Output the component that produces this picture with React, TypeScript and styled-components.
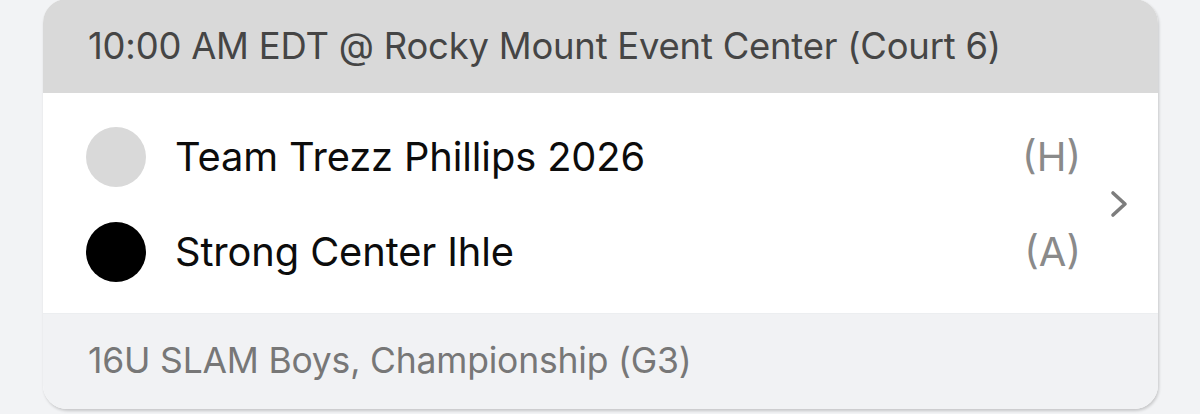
import React from "react";
import styled, { createGlobalStyle } from "styled-components";

const Global = createGlobalStyle`
  html, body { margin: 0; padding: 0; background: #f2f3f5; }
  body { font-family: "Inter", "Noto Sans", sans-serif; -webkit-font-smoothing: antialiased; }
`;

const Page = styled.div`
  width: 1200px;
  height: 414px;
  padding: 0 42px 0 43px;
  box-sizing: border-box;
  overflow: hidden;
  background: #f2f3f5;
`;

const Card = styled.div`
  margin-top: -1px;
  width: 1115px;
  border-radius: 24px;
  overflow: hidden;
  background: #ffffff;
  box-shadow: 1px 2px 3px rgba(0, 0, 0, 0.18);
`;

const Header = styled.div`
  height: 94px;
  display: flex;
  align-items: center;
  padding: 0 45px;
  background: #d9d9d9;
  color: #454545;
  font-size: 36.4px;
  letter-spacing: -0.2px;
`;

const Body = styled.div`
  display: flex;
  align-items: center;
  padding: 16px 0 14px 43px;
`;

const Rows = styled.div`
  flex: 1;
  display: flex;
  flex-direction: column;
`;

const Row = styled.div`
  height: 95px;
  display: flex;
  align-items: center;
`;

const Dot = styled.span<{ $color: string }>`
  width: 60px;
  height: 60px;
  border-radius: 50%;
  background: ${(p) => p.$color};
  flex: none;
`;

const Name = styled.span`
  margin-left: 29px;
  flex: 1;
  font-size: 39.8px;
  color: #0c0c0c;
  letter-spacing: -0.1px;
`;

const Side = styled.span`
  font-size: 40px;
  color: #8a8a8a;
`;

const Chevron = styled.div`
  width: 77px;
  display: flex;
  justify-content: flex-start;
  padding-left: 29px;
  box-sizing: border-box;
`;

const Footer = styled.div`
  height: 96px;
  display: flex;
  align-items: center;
  padding: 0 45px;
  background: #f1f2f4;
  border-top: 1px solid #eceef0;
  color: #777777;
  font-size: 35.5px;
  letter-spacing: -0.2px;
  padding-bottom: 2px;
  box-sizing: border-box;
`;

const teams = [
  { name: "Team Trezz Phillips 2026", side: "(H)", color: "#d9d9d9" },
  { name: "Strong Center Ihle", side: "(A)", color: "#000000" },
];

export default function App() {
  return (
    <>
      <Global />
      <Page>
        <Card>
          <Header>10:00 AM EDT @ Rocky Mount Event Center (Court 6)</Header>
          <Body>
            <Rows>
              {teams.map((t) => (
                <Row key={t.name}>
                  <Dot $color={t.color} />
                  <Name>{t.name}</Name>
                  <Side>{t.side}</Side>
                </Row>
              ))}
            </Rows>
            <Chevron>
              <svg width="19" height="28" viewBox="0 0 19 28" fill="none">
                <path d="M3 3 L15 14 L3 25" stroke="#7d7d7d" strokeWidth="3.6" strokeLinecap="round" strokeLinejoin="round" />
              </svg>
            </Chevron>
          </Body>
          <Footer>16U SLAM Boys, Championship (G3)</Footer>
        </Card>
      </Page>
    </>
  );
}
